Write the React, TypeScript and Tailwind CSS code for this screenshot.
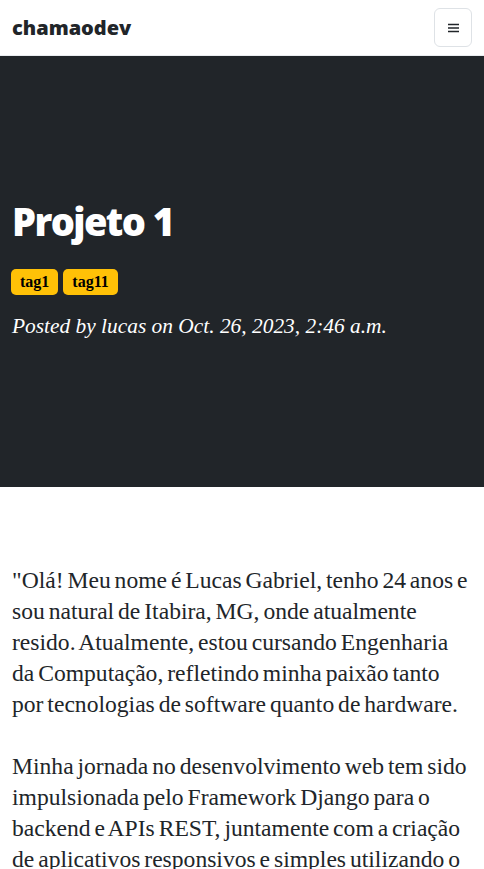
export default function App() {
  const sans = { fontFamily: '"Open Sans", "Liberation Sans", sans-serif' };
  const serif = { fontFamily: '"Liberation Serif", "DejaVu Serif", serif' };

  return (
    <div className="min-h-screen bg-white text-[#212529]">
      {/* Navbar */}
      <nav className="h-14 flex items-center justify-between pl-3 pr-3 border-b border-[#e9ecef] bg-white">
        <span className="text-[20px] font-extrabold tracking-normal text-[#212529]" style={sans}>
          chamaodev
        </span>
        <button
          className="w-[38px] h-[39px] flex items-center justify-center border border-[#dee2e6] rounded-md"
          aria-label="Menu"
        >
          <svg width="11" height="10" viewBox="0 0 11 10">
            <path d="M0 1.5h11M0 5h11M0 8.5h11" stroke="#212529" strokeWidth="1.4" />
          </svg>
        </button>
      </nav>

      {/* Header */}
      <header className="bg-[#212529] px-3 pt-[143px] pb-[146px] text-white">
        <h1 className="text-[38px] leading-[44px] font-extrabold tracking-[-1.6px]" style={sans}>
          Projeto 1
        </h1>
        <div className="flex gap-[5px] mt-[26px] -ml-px">
          <span className="bg-[#ffc107] text-black font-bold text-[16px] px-[9px] h-[26px] flex items-center rounded-[5px]" style={serif}>
            tag1
          </span>
          <span className="bg-[#ffc107] text-black font-bold text-[16px] px-[9px] h-[26px] flex items-center rounded-[5px]" style={serif}>
            tag11
          </span>
        </div>
        <p className="italic text-[21.4px] leading-[30px] mt-[16px]" style={serif}>
          Posted by lucas on Oct. 26, 2023, 2:46 a.m.
        </p>
      </header>

      {/* Post body */}
      <main className="px-3 pt-[78px] text-[23.6px] leading-[31px] [word-spacing:-2px] text-[#212529]" style={serif}>
        <p>
          "Olá! Meu nome é Lucas Gabriel, tenho 24 anos e sou natural de Itabira, MG, onde atualmente resido. Atualmente, estou cursando Engenharia da Computação, refletindo minha paixão tanto por tecnologias de software quanto de hardware.
        </p>
        <p className="mt-[31px]">
          Minha jornada no desenvolvimento web tem sido impulsionada pelo Framework Django para o backend e APIs REST, juntamente com a criação de aplicativos responsivos e simples utilizando o React Native para o frontend.
        </p>
      </main>
    </div>
  );
}
